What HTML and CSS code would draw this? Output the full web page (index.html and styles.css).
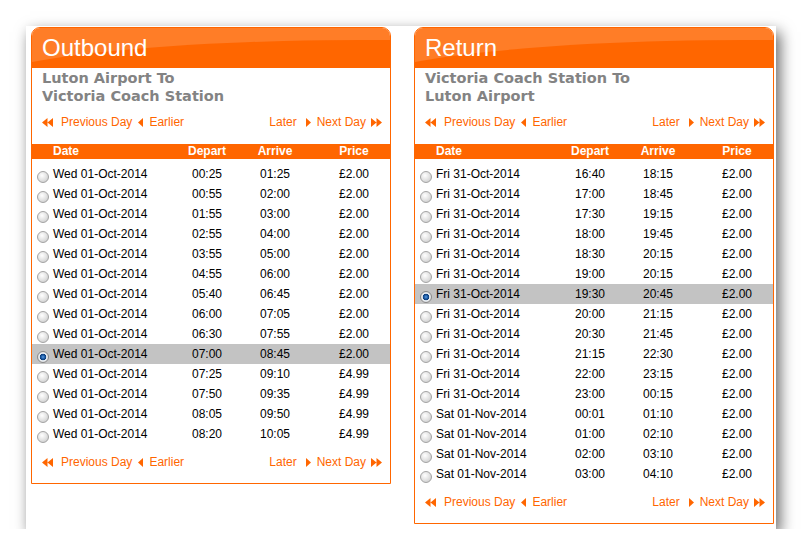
FILE: index.html
```html
<!DOCTYPE html>
<html lang="en">
<head>
  <meta charset="UTF-8">
  <title>Choose Your Journey Times</title>
  <link rel="stylesheet" href="styles.css">
</head>
<body>
  <div class="paper">
    <div class="panel">
      <div class="head"><h2>Outbound</h2></div>
      <div class="route">Luton Airport To<br>Victoria Coach Station</div>
      <div class="nav">
        <div class="side">
          <svg class="dbl" width="11" height="9" viewBox="0 0 11 9"><path d="M5.5 0L0 4.5L5.5 9ZM11 0L5.5 4.5L11 9Z"/></svg>
          <a href="#">Previous Day</a>
          <svg class="one" width="5" height="9" viewBox="0 0 5 9"><path d="M5 0L0 4.5L5 9Z"/></svg>
          <a href="#" class="after">Earlier</a>
        </div>
        <div class="side">
          <a href="#">Later</a>
          <svg class="one r" width="5" height="9" viewBox="0 0 5 9"><path d="M0 0L5 4.5L0 9Z"/></svg>
          <a href="#" class="after">Next Day</a>
          <svg class="dbl r" width="11" height="9" viewBox="0 0 11 9"><path d="M0 0L5.5 4.5L0 9ZM5.5 0L11 4.5L5.5 9Z"/></svg>
        </div>
      </div>
      <div class="thead"><span></span><span class="date">Date</span><span>Depart</span><span>Arrive</span><span>Price</span></div>
      <div class="rows">
        <div class="row"><input type="radio" name="out"><span class="date">Wed 01-Oct-2014</span><span>00:25</span><span>01:25</span><span>£2.00</span></div>
        <div class="row"><input type="radio" name="out"><span class="date">Wed 01-Oct-2014</span><span>00:55</span><span>02:00</span><span>£2.00</span></div>
        <div class="row"><input type="radio" name="out"><span class="date">Wed 01-Oct-2014</span><span>01:55</span><span>03:00</span><span>£2.00</span></div>
        <div class="row"><input type="radio" name="out"><span class="date">Wed 01-Oct-2014</span><span>02:55</span><span>04:00</span><span>£2.00</span></div>
        <div class="row"><input type="radio" name="out"><span class="date">Wed 01-Oct-2014</span><span>03:55</span><span>05:00</span><span>£2.00</span></div>
        <div class="row"><input type="radio" name="out"><span class="date">Wed 01-Oct-2014</span><span>04:55</span><span>06:00</span><span>£2.00</span></div>
        <div class="row"><input type="radio" name="out"><span class="date">Wed 01-Oct-2014</span><span>05:40</span><span>06:45</span><span>£2.00</span></div>
        <div class="row"><input type="radio" name="out"><span class="date">Wed 01-Oct-2014</span><span>06:00</span><span>07:05</span><span>£2.00</span></div>
        <div class="row"><input type="radio" name="out"><span class="date">Wed 01-Oct-2014</span><span>06:30</span><span>07:55</span><span>£2.00</span></div>
        <div class="row selected"><input type="radio" name="out" checked><span class="date">Wed 01-Oct-2014</span><span>07:00</span><span>08:45</span><span>£2.00</span></div>
        <div class="row"><input type="radio" name="out"><span class="date">Wed 01-Oct-2014</span><span>07:25</span><span>09:10</span><span>£4.99</span></div>
        <div class="row"><input type="radio" name="out"><span class="date">Wed 01-Oct-2014</span><span>07:50</span><span>09:35</span><span>£4.99</span></div>
        <div class="row"><input type="radio" name="out"><span class="date">Wed 01-Oct-2014</span><span>08:05</span><span>09:50</span><span>£4.99</span></div>
        <div class="row"><input type="radio" name="out"><span class="date">Wed 01-Oct-2014</span><span>08:20</span><span>10:05</span><span>£4.99</span></div>
      </div>
      <div class="nav bottom">
        <div class="side">
          <svg class="dbl" width="11" height="9" viewBox="0 0 11 9"><path d="M5.5 0L0 4.5L5.5 9ZM11 0L5.5 4.5L11 9Z"/></svg>
          <a href="#">Previous Day</a>
          <svg class="one" width="5" height="9" viewBox="0 0 5 9"><path d="M5 0L0 4.5L5 9Z"/></svg>
          <a href="#" class="after">Earlier</a>
        </div>
        <div class="side">
          <a href="#">Later</a>
          <svg class="one r" width="5" height="9" viewBox="0 0 5 9"><path d="M0 0L5 4.5L0 9Z"/></svg>
          <a href="#" class="after">Next Day</a>
          <svg class="dbl r" width="11" height="9" viewBox="0 0 11 9"><path d="M0 0L5.5 4.5L0 9ZM5.5 0L11 4.5L5.5 9Z"/></svg>
        </div>
      </div>
    </div>

    <div class="panel">
      <div class="head"><h2>Return</h2></div>
      <div class="route">Victoria Coach Station To<br>Luton Airport</div>
      <div class="nav">
        <div class="side">
          <svg class="dbl" width="11" height="9" viewBox="0 0 11 9"><path d="M5.5 0L0 4.5L5.5 9ZM11 0L5.5 4.5L11 9Z"/></svg>
          <a href="#">Previous Day</a>
          <svg class="one" width="5" height="9" viewBox="0 0 5 9"><path d="M5 0L0 4.5L5 9Z"/></svg>
          <a href="#" class="after">Earlier</a>
        </div>
        <div class="side">
          <a href="#">Later</a>
          <svg class="one r" width="5" height="9" viewBox="0 0 5 9"><path d="M0 0L5 4.5L0 9Z"/></svg>
          <a href="#" class="after">Next Day</a>
          <svg class="dbl r" width="11" height="9" viewBox="0 0 11 9"><path d="M0 0L5.5 4.5L0 9ZM5.5 0L11 4.5L5.5 9Z"/></svg>
        </div>
      </div>
      <div class="thead"><span></span><span class="date">Date</span><span>Depart</span><span>Arrive</span><span>Price</span></div>
      <div class="rows">
        <div class="row"><input type="radio" name="ret"><span class="date">Fri 31-Oct-2014</span><span>16:40</span><span>18:15</span><span>£2.00</span></div>
        <div class="row"><input type="radio" name="ret"><span class="date">Fri 31-Oct-2014</span><span>17:00</span><span>18:45</span><span>£2.00</span></div>
        <div class="row"><input type="radio" name="ret"><span class="date">Fri 31-Oct-2014</span><span>17:30</span><span>19:15</span><span>£2.00</span></div>
        <div class="row"><input type="radio" name="ret"><span class="date">Fri 31-Oct-2014</span><span>18:00</span><span>19:45</span><span>£2.00</span></div>
        <div class="row"><input type="radio" name="ret"><span class="date">Fri 31-Oct-2014</span><span>18:30</span><span>20:15</span><span>£2.00</span></div>
        <div class="row"><input type="radio" name="ret"><span class="date">Fri 31-Oct-2014</span><span>19:00</span><span>20:15</span><span>£2.00</span></div>
        <div class="row selected"><input type="radio" name="ret" checked><span class="date">Fri 31-Oct-2014</span><span>19:30</span><span>20:45</span><span>£2.00</span></div>
        <div class="row"><input type="radio" name="ret"><span class="date">Fri 31-Oct-2014</span><span>20:00</span><span>21:15</span><span>£2.00</span></div>
        <div class="row"><input type="radio" name="ret"><span class="date">Fri 31-Oct-2014</span><span>20:30</span><span>21:45</span><span>£2.00</span></div>
        <div class="row"><input type="radio" name="ret"><span class="date">Fri 31-Oct-2014</span><span>21:15</span><span>22:30</span><span>£2.00</span></div>
        <div class="row"><input type="radio" name="ret"><span class="date">Fri 31-Oct-2014</span><span>22:00</span><span>23:15</span><span>£2.00</span></div>
        <div class="row"><input type="radio" name="ret"><span class="date">Fri 31-Oct-2014</span><span>23:00</span><span>00:15</span><span>£2.00</span></div>
        <div class="row"><input type="radio" name="ret"><span class="date">Sat 01-Nov-2014</span><span>00:01</span><span>01:10</span><span>£2.00</span></div>
        <div class="row"><input type="radio" name="ret"><span class="date">Sat 01-Nov-2014</span><span>01:00</span><span>02:10</span><span>£2.00</span></div>
        <div class="row"><input type="radio" name="ret"><span class="date">Sat 01-Nov-2014</span><span>02:00</span><span>03:10</span><span>£2.00</span></div>
        <div class="row"><input type="radio" name="ret"><span class="date">Sat 01-Nov-2014</span><span>03:00</span><span>04:10</span><span>£2.00</span></div>
      </div>
      <div class="nav bottom">
        <div class="side">
          <svg class="dbl" width="11" height="9" viewBox="0 0 11 9"><path d="M5.5 0L0 4.5L5.5 9ZM11 0L5.5 4.5L11 9Z"/></svg>
          <a href="#">Previous Day</a>
          <svg class="one" width="5" height="9" viewBox="0 0 5 9"><path d="M5 0L0 4.5L5 9Z"/></svg>
          <a href="#" class="after">Earlier</a>
        </div>
        <div class="side">
          <a href="#">Later</a>
          <svg class="one r" width="5" height="9" viewBox="0 0 5 9"><path d="M0 0L5 4.5L0 9Z"/></svg>
          <a href="#" class="after">Next Day</a>
          <svg class="dbl r" width="11" height="9" viewBox="0 0 11 9"><path d="M0 0L5.5 4.5L0 9ZM5.5 0L11 4.5L5.5 9Z"/></svg>
        </div>
      </div>
    </div>
  </div>
</body>
</html>
```

FILE: styles.css
```css
:root {
  --orange: #ff6600;
  --orange-light: #ff7d27;
  --route: #838383;
  --selected: #c3c3c3;
}
* { box-sizing: border-box; }
body {
  margin: 0;
  background: #fff;
  font-family: 'Liberation Sans', Arial, sans-serif;
  font-size: 12px;
  color: #000;
}
.paper {
  display: flex;
  align-items: flex-start;
  gap: 23px;
  width: 750px; height: 503px;
  margin: 26px 0 0 26px;
  padding: 1px 0 0 5px;
  background: #fff;
  box-shadow: 4px 6px 14px rgba(0,0,0,0.6);
}
.panel {
  width: 360px;
  border: 1px solid var(--orange);
  border-radius: 9px 9px 0 0;
  overflow: hidden;
  padding-bottom: 14px;
}
.head {
  position: relative;
  height: 40px;
  padding: 6px 10px 0;
  background: var(--orange-light);
  overflow: hidden;
}
/* darker swoosh under the glossy top */
.head::before {
  content: '';
  position: absolute;
  left: -70px; top: 12px;
  width: 800px; height: 101px;
  border-radius: 50%;
  background: var(--orange);
}
.head h2 {
  position: relative;
  margin: 0;
  font-size: 24px; line-height: 27px;
  font-weight: normal;
  color: #fff;
}
.route {
  padding: 1px 10px 0;
  font-family: 'DejaVu Sans', Verdana, sans-serif;
  font-weight: bold;
  font-size: 14.5px; line-height: 18px;
  color: var(--route);
}
.nav {
  display: flex;
  justify-content: space-between;
  margin-top: 10px;
  padding: 0 8px 0 10px;
  line-height: 14px;
}
.nav.bottom { margin-top: 11px; }
.side { display: flex; align-items: center; }
.nav a { color: var(--orange); text-decoration: none; }
.nav svg { fill: var(--orange); display: block; }
.nav .dbl { margin-right: 8px; }
.nav .one { margin: 0 6px 0 6px; }
.nav .one.r { margin: 0 6px 0 9px; }
.nav .dbl.r { margin: 0 0 0 5px; }
.thead, .row {
  display: grid;
  grid-template-columns: 21px 129px 50px 86px 1fr;
  text-align: center;
}
.thead {
  margin-top: 15px;
  height: 15px; line-height: 15px;
  background: var(--orange);
  color: #fff;
  font-weight: bold;
}
.thead .date, .row .date { text-align: left; }
.rows { padding-top: 5px; }
.row { height: 20px; line-height: 20px; }
.row.selected { background: var(--selected); }
.row input {
  appearance: none;
  -webkit-appearance: none;
  width: 12px; height: 12px;
  margin: 7px 0 0 5px;
  border: 1px solid #a3a3a3;
  border-radius: 50%;
  background: radial-gradient(circle at 40% 35%, #fff 0, #e6e6e6 45%, #c4c4c4 100%);
}
.row input:checked {
  border-color: #8a8a8a;
  background: radial-gradient(circle at 50% 50%, #5d9be0 0, #1d5ca6 1.8px, #0c3b78 3px, #eef2f6 3.6px, #d2d2d2 6px);
}
```
